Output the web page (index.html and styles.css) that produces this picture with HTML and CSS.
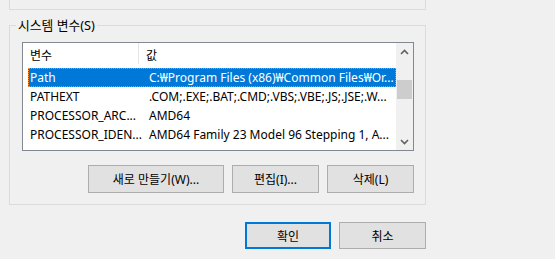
FILE: index.html
```html
<!DOCTYPE html>
<html lang="ko">
<head>
    <meta charset="UTF-8" />
    <title>환경 변수</title>
    <link rel="stylesheet" href="styles.css">
</head>
<body>

<div class="top-box"></div>

<fieldset class="group">
    <legend>시스템 변수(S)</legend>
    <div class="list">
        <div class="list-main">
            <div class="list-head">
                <div class="col col-name">변수</div>
                <div class="col col-value">값</div>
            </div>
            <div class="list-body">
                <div class="row selected">
                    <div class="col col-name">Path</div>
                    <div class="col col-value">C:₩Program Files (x86)₩Common Files₩Or...</div>
                </div>
                <div class="row">
                    <div class="col col-name">PATHEXT</div>
                    <div class="col col-value">.COM;.EXE;.BAT;.CMD;.VBS;.VBE;.JS;.JSE;.W...</div>
                </div>
                <div class="row">
                    <div class="col col-name">PROCESSOR_ARC...</div>
                    <div class="col col-value">AMD64</div>
                </div>
                <div class="row">
                    <div class="col col-name">PROCESSOR_IDEN...</div>
                    <div class="col col-value">AMD64 Family 23 Model 96 Stepping 1, A...</div>
                </div>
            </div>
        </div>
        <div class="scrollbar">
            <div class="arrow">
                <svg width="9" height="6" viewBox="0 0 9 6"><polyline points="1,5 4.5,1.5 8,5" fill="none" stroke="#606060" stroke-width="1.6"/></svg>
            </div>
            <div class="track">
                <div class="thumb"></div>
            </div>
            <div class="arrow">
                <svg width="9" height="6" viewBox="0 0 9 6"><polyline points="1,1 4.5,4.5 8,1" fill="none" stroke="#606060" stroke-width="1.6"/></svg>
            </div>
        </div>
    </div>
    <div class="btn-row">
        <button class="btn btn-new">새로 만들기(W)...</button>
        <button class="btn btn-small">편집(I)...</button>
        <button class="btn btn-small">삭제(L)</button>
    </div>
</fieldset>

<div class="dialog-row">
    <button class="btn btn-dialog default">확인</button>
    <button class="btn btn-dialog">취소</button>
</div>

</body>
</html>
```

FILE: styles.css
```css
body {
    margin: 0;
    padding: 0 0 0 9px;
    background: #f0f0f0;
    font-family: "Noto Sans", "Noto Sans CJK KR", sans-serif;
    font-size: 12px;
    color: #000;
}

.top-box {
    box-sizing: border-box;
    width: 417px;
    height: 10px;
    border: 1px solid #dcdcdc;
    border-top: none;
}

.group {
    box-sizing: border-box;
    width: 417px;
    margin: 7px 0 0 0;
    padding: 9px 11px 11px 12px;
    border: 1px solid #dcdcdc;
    min-inline-size: 0;
}

.group legend {
    padding: 0 2px;
    margin-left: -6px;
    line-height: 16px;
    font-size: 12.8px;
}

/* 목록 */
.list {
    box-sizing: border-box;
    width: 392px;
    height: 109px;
    border: 1px solid #828790;
    background: #fff;
    display: flex;
}

.list-main {
    flex: 1;
    overflow: hidden;
}

.list-head {
    display: flex;
    height: 24px;
    padding-left: 5px;
}

.list-head .col {
    line-height: 24px;
    padding-top: 1px;
}

.list-head .col-name {
    border-right: 1px solid #e5e5e5;
    height: 21px;
    box-sizing: border-box;
    width: 111px;
    padding-left: 2px;
}

.list-head .col-value {
    padding-left: 7px;
}

.list-body {
    padding: 1px 0 0 5px;
}

.row {
    display: flex;
    height: 19px;
    line-height: 17px;
    box-sizing: border-box;
    border: 1px solid transparent;
}

.row.selected {
    background: #0078d7;
    color: #fff;
    border: 1px dotted #ff8728;
}

.col {
    padding-left: 2px;
    white-space: nowrap;
}

.col-name {
    flex: none;
}

.row .col-name {
    padding-left: 1px;
    width: 117px;
}

/* 스크롤바 */
.scrollbar {
    width: 17px;
    flex: none;
    background: #f0f0f0;
    display: flex;
    flex-direction: column;
}

.arrow {
    height: 17px;
    display: flex;
    align-items: center;
    justify-content: center;
}

.track {
    flex: 1;
    padding-top: 20px;
}

.thumb {
    margin: 0 1px;
    height: 19px;
    background: #cdcdcd;
}

/* 버튼 */
.btn-row {
    display: flex;
    justify-content: flex-end;
    gap: 8px;
    margin-top: 14px;
}

.btn {
    box-sizing: border-box;
    height: 28px;
    background: #e1e1e1;
    border: 1px solid #adadad;
    font-family: inherit;
    font-size: 12px;
    color: #000;
    padding: 0;
}

.btn-new {
    width: 136px;
}

.btn-small {
    width: 87px;
}

.dialog-row {
    width: 417px;
    display: flex;
    justify-content: flex-end;
    gap: 8px;
    margin-top: 17px;
}

.btn-dialog {
    width: 87px;
    height: 27px;
}

.btn-dialog.default {
    width: 86px;
    border: 2px solid #0078d7;
}
```
